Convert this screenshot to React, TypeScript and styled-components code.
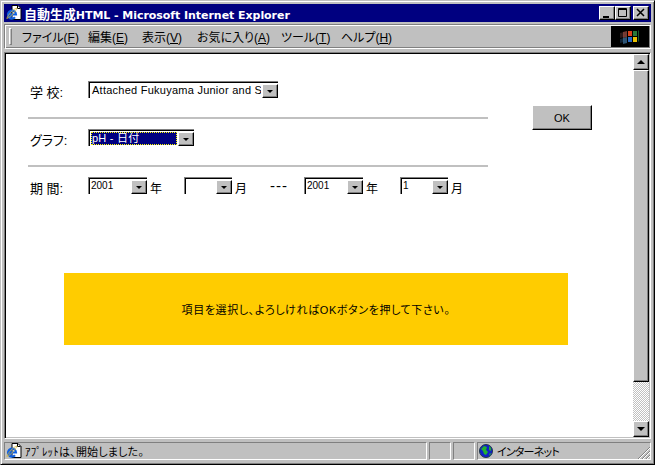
import { ReactNode } from "react";
import styled, { createGlobalStyle } from "styled-components";

const FONT = `"Liberation Sans", "Noto Sans CJK JP", sans-serif`;

const GlobalStyle = createGlobalStyle`
  html, body { margin: 0; padding: 0; background: #c0c0c0; overflow: hidden; }
  * { box-sizing: border-box; }
  body { font-feature-settings: "palt"; }
`;

const Win = styled.div`
  width: 655px;
  height: 465px;
  background: #c0c0c0;
  border: 1px solid;
  border-color: #c0c0c0 #000 #000 #c0c0c0;
  box-shadow: inset 1px 1px 0 #fff, inset -1px -1px 0 #808080;
  padding: 3px 3px 4px 3px;
  display: flex;
  flex-direction: column;
  font-family: ${FONT};
  color: #000;
`;

const TitleBar = styled.div`
  height: 18px;
  flex: none;
  background: #000080;
  display: flex;
  align-items: center;
  padding: 0 2px 0 2px;
  color: #fff;
`;

const TitleText = styled.span`
  margin-left: 2px;
  flex: 1;
  white-space: nowrap;
  font-family: "DejaVu Sans", "Noto Sans CJK JP", sans-serif;
  font-size: 11px;
  font-weight: 700;
  letter-spacing: -0.05px;
`;

const TitleCjk = styled.span`
  font-family: "Noto Sans CJK JP", sans-serif;
  font-size: 13px;
  font-feature-settings: normal;
`;

const CaptionBtn = styled.div<{ $gap?: number }>`
  width: 16px;
  height: 14px;
  margin-left: ${(p) => p.$gap ?? 0}px;
  background: #c0c0c0;
  border: 1px solid;
  border-color: #fff #000 #000 #fff;
  box-shadow: inset -1px -1px 0 #808080;
  display: flex;
  align-items: center;
  justify-content: center;
`;

const MenuBand = styled.div`
  height: 25px;
  margin-top: 2px;
  flex: none;
  display: flex;
  align-items: stretch;
  border: 1px solid;
  border-color: #808080 #fff #fff #808080;
  box-shadow: inset 1px 1px 0 #fff, inset -1px -1px 0 #808080;
  padding: 2px 1px 2px 4px;
`;

const Grip = styled.div`
  width: 3px;
  margin: 1px 0;
  flex: none;
  border: 1px solid;
  border-color: #fff #808080 #808080 #fff;
`;

const Menu = styled.div`
  flex: 1;
  display: flex;
  align-items: center;
  font-size: 12px;
  padding-left: 10px;
`;

const MenuItem = styled.span<{ $w: number }>`
  width: ${(p) => p.$w}px;
  white-space: nowrap;
`;

const Throbber = styled.div`
  width: 38px;
  background: #000;
  flex: none;
  display: flex;
  align-items: center;
  justify-content: center;
  margin: -1px 0;
`;

const Client = styled.div`
  flex: 1;
  min-height: 0;
  margin-top: 3px;
  display: flex;
  background: #fff;
  border: 1px solid;
  border-color: #808080 #fff #fff #808080;
  box-shadow: inset 1px 1px 0 #000, inset -1px -1px 0 #c0c0c0;
  padding: 1px;
`;

const Page = styled.div`
  flex: 1;
  min-width: 0;
  padding: 27px 0 0 22px;
  font-size: 11px;
`;

const TopArea = styled.div`
  display: flex;
  align-items: flex-start;
`;

const FormArea = styled.div`
  width: 460px;
`;

const Row = styled.div`
  height: 17px;
  display: flex;
  align-items: center;
`;

const Label = styled.span`
  width: 60px;
  padding: 4px 0 0 2px;
  flex: none;
  font-size: 13px;
`;

const Rule = styled.div`
  height: 2px;
  background: #c0c0c0;
  margin: 19px 0 10px;
`;

const SelectBox = styled.div<{ $w: number }>`
  width: ${(p) => p.$w}px;
  height: 17px;
  flex: none;
  display: flex;
  background: #fff;
  border: solid #808080;
  border-width: 1px 0 0 1px;
  box-shadow: inset 1px 1px 0 #000;
  padding: 1px 0 0 1px;
`;

const SelectValue = styled.div<{ $active?: boolean; $small?: boolean }>`
  flex: 1;
  min-width: 0;
  overflow: hidden;
  white-space: nowrap;
  margin: 1px 1px 1px 1px;
  line-height: 12px;
  font-size: ${(p) => (p.$small ? 10 : 11)}px;
  letter-spacing: ${(p) => (p.$small ? 0 : 0.25)}px;
  padding-left: ${(p) => (p.$small ? 0 : 1)}px;
  background: ${(p) => (p.$active ? "#000080" : "transparent")};
  color: ${(p) => (p.$active ? "#fff" : "#000")};
  outline: ${(p) => (p.$active ? "1px dotted #ffff00" : "none")};
  outline-offset: -1px;
`;

const Arrow = styled.div`
  width: 16px;
  flex: none;
  margin-top: 1px;
  background: #c0c0c0;
  border: 1px solid;
  border-color: #fff #000 #000 #fff;
  box-shadow: inset -1px -1px 0 #808080;
  display: flex;
  align-items: center;
  justify-content: center;
`;

const Tri = styled.div<{ $up?: boolean; $size?: number }>`
  width: 0;
  height: 0;
  border-left: ${(p) => p.$size ?? 3}px solid transparent;
  border-right: ${(p) => p.$size ?? 3}px solid transparent;
  ${(p) =>
    p.$up
      ? `border-bottom: ${p.$size ?? 3}px solid #000;`
      : `border-top: ${p.$size ?? 3}px solid #000;`}
`;

const Unit = styled.span<{ $w: number }>`
  width: ${(p) => p.$w}px;
  flex: none;
  padding: 3px 0 0 3px;
  font-size: 12px;
`;

const Dash = styled(Unit)`
  font-size: 15px;
  letter-spacing: 1px;
  padding: 0;
`;

const OkButton = styled.button`
  width: 60px;
  height: 25px;
  margin: 24px 0 0 44px;
  padding: 0;
  flex: none;
  background: #c0c0c0;
  border: 1px solid;
  border-color: #fff #000 #000 #fff;
  box-shadow: inset -1px -1px 0 #808080;
  font-family: ${FONT};
  font-size: 11px;
  color: #000;
`;

const Notice = styled.div`
  width: 504px;
  height: 72px;
  margin: 79px 0 0 36px;
  background: #ffcc00;
  display: flex;
  align-items: center;
  justify-content: center;
  font-size: 11px;
  letter-spacing: 0.6px;
`;

const ScrollBar = styled.div`
  width: 16px;
  flex: none;
  display: flex;
  flex-direction: column;
`;

const ScrollBtn = styled.div<{ $h?: number }>`
  height: ${(p) => p.$h ?? 16}px;
  flex: none;
  background: #c0c0c0;
  border: 1px solid;
  border-color: #fff #000 #000 #fff;
  box-shadow: inset -1px -1px 0 #808080;
  display: flex;
  align-items: center;
  justify-content: center;
`;

const ScrollTrack = styled.div`
  flex: 1;
  background: repeating-conic-gradient(#fff 0 25%, #c0c0c0 0 50%) 0 0 / 2px 2px;
`;

const StatusBar = styled.div`
  height: 18px;
  margin-top: 3px;
  flex: none;
  display: flex;
  gap: 2px;
  font-size: 11px;
`;

const StatusCell = styled.div<{ $w?: number }>`
  ${(p) => (p.$w ? `width: ${p.$w}px; flex: none;` : "flex: 1;")}
  min-width: 0;
  display: flex;
  align-items: center;
  gap: 3px;
  padding-left: 1px;
  border: 1px solid;
  border-color: #808080 #fff #fff #808080;
  white-space: nowrap;
  letter-spacing: 0.2px;
`;

const ZoneCell = styled(StatusCell)`
  gap: 4px;
  padding-left: 1px;
  letter-spacing: -0.8px;
`;

const IeIcon = () => (
  <svg width="16" height="16" viewBox="0 0 16 16">
    <path d="M6 .5h6l3 3v11H6z" fill="#fff" stroke="#000" />
    <path d="M11.500 .5v3h3" fill="none" stroke="#000" />
    <path
      d="M2.500 9.500h7.500a4 4 0 1 0-1 2.800M3 6.800a4 4 0 0 1 1.200 6"
      fill="none"
      stroke="#1060e0"
      strokeWidth="2.200"
    />
    <path d="M.8 13.500C2 10 7 4 11 3c-.8 2.500-6 9-10.200 10.500z" fill="none" stroke="#d8b838" strokeWidth=".8" />
  </svg>
);

const Globe = () => (
  <svg width="14" height="14" viewBox="0 0 14 14">
    <circle cx="7" cy="7" r="6.500" fill="#1020c8" stroke="#203848" />
    <path d="M2 5l3-3 3 1-1 3 2 2-2 3-2-1-1-3zM10 2l2 2v3l-2-1zM10 10l2-1-1 3z" fill="#20b030" />
  </svg>
);

// dim, smeared flag like the throbber's first frame
const Flag = () => (
  <svg width="20" height="18" viewBox="0 0 20 18">
    <path d="M0 5l4-1v5l-4 1z" fill="#503030" opacity=".55" />
    <path d="M0 11l4-1v4l-4 1z" fill="#204060" opacity=".55" />
    <path d="M3 4l4-1v6l-4 1z" fill="#904840" opacity=".8" />
    <path d="M3 10l4-1v6l-4 1z" fill="#386890" opacity=".8" />
    <path d="M8 3h4v5H8z" fill="#d84018" />
    <path d="M13 3h4v5h-4z" fill="#287838" />
    <path d="M8 9h4v5H8z" fill="#2868c0" />
    <path d="M13 9h4v5h-4z" fill="#e8c000" />
    <path d="M18 2l1 1v10l-1 1z" fill="#185828" />
  </svg>
);

const Resize = () => (
  <svg width="12" height="12" viewBox="0 0 12 12">
    <path d="M0 12L12 0M4 12l8-8M8 12l4-4" stroke="#808080" strokeWidth="1" />
    <path d="M1 12L12 1M5 12l7-7M9 12l3-3" stroke="#fff" strokeWidth="1" />
  </svg>
);

const ResizeSlot = styled.div`
  margin-left: auto;
  align-self: flex-end;
  display: flex;
`;

const Select = ({
  w,
  active,
  small,
  children,
}: {
  w: number;
  active?: boolean;
  small?: boolean;
  children?: ReactNode;
}) => (
  <SelectBox $w={w}>
    <SelectValue $active={active} $small={small}>
      {children}
    </SelectValue>
    <Arrow>
      <Tri />
    </Arrow>
  </SelectBox>
);

const menus: [string, string, number][] = [
  ["ファイル", "F", 66],
  ["編集", "E", 54],
  ["表示", "V", 55],
  ["お気に入り", "A", 84],
  ["ツール", "T", 60],
  ["ヘルプ", "H", 60],
];

export default function App() {
  return (
    <>
      <GlobalStyle />
      <Win>
        <TitleBar>
          <IeIcon />
          <TitleText>
            <TitleCjk>自動生成</TitleCjk>HTML - Microsoft Internet Explorer
          </TitleText>
          <CaptionBtn>
            <svg width="10" height="10" viewBox="0 0 10 10">
              <path d="M1 8h6v2H1z" />
            </svg>
          </CaptionBtn>
          <CaptionBtn>
            <svg width="10" height="10" viewBox="0 0 10 10">
              <path d="M.5.5h8v8h-8zM.5 1.500h8" fill="none" stroke="#000" />
            </svg>
          </CaptionBtn>
          <CaptionBtn $gap={2}>
            <svg width="10" height="10" viewBox="0 0 10 10">
              <path d="M1 1l7 7M8 1L1 8" fill="none" stroke="#000" strokeWidth="1.500" />
            </svg>
          </CaptionBtn>
        </TitleBar>
        <MenuBand>
          <Grip />
          <Menu>
            {menus.map(([name, key, w]) => (
              <MenuItem key={key} $w={w}>
                {name}(<u>{key}</u>)
              </MenuItem>
            ))}
          </Menu>
          <Throbber>
            <Flag />
          </Throbber>
        </MenuBand>
        <Client>
          <Page>
            <TopArea>
              <FormArea>
                <Row>
                  <Label>学 校:</Label>
                  <Select w={190}>Attached Fukuyama Junior and Senior</Select>
                </Row>
                <Rule />
                <Row>
                  <Label>グラフ:</Label>
                  <Select w={106} active>
                    pH - 日付
                  </Select>
                </Row>
                <Rule />
                <Row>
                  <Label>期 間:</Label>
                  <Select w={59} small>
                    2001
                  </Select>
                  <Unit $w={37}>年</Unit>
                  <Select w={48} small />
                  <Unit $w={38}>月</Unit>
                  <Dash $w={34}>---</Dash>
                  <Select w={59} small>
                    2001
                  </Select>
                  <Unit $w={37}>年</Unit>
                  <Select w={48} small>
                    1
                  </Select>
                  <Unit $w={20}>月</Unit>
                </Row>
              </FormArea>
              <OkButton>OK</OkButton>
            </TopArea>
            <Notice>項目を選択し、よろしければOKボタンを押して下さい。</Notice>
          </Page>
          <ScrollBar>
            <ScrollBtn>
              <Tri $up $size={4} />
            </ScrollBtn>
            <ScrollBtn $h={312} />
            <ScrollTrack />
            <ScrollBtn>
              <Tri $size={4} />
            </ScrollBtn>
          </ScrollBar>
        </Client>
        <StatusBar>
          <StatusCell>
            <IeIcon />
            ｱﾌﾟﾚｯﾄは、開始しました。
          </StatusCell>
          <StatusCell $w={22} />
          <StatusCell $w={22} />
          <ZoneCell $w={174}>
            <Globe />
            インターネット
            <ResizeSlot>
              <Resize />
            </ResizeSlot>
          </ZoneCell>
        </StatusBar>
      </Win>
    </>
  );
}
